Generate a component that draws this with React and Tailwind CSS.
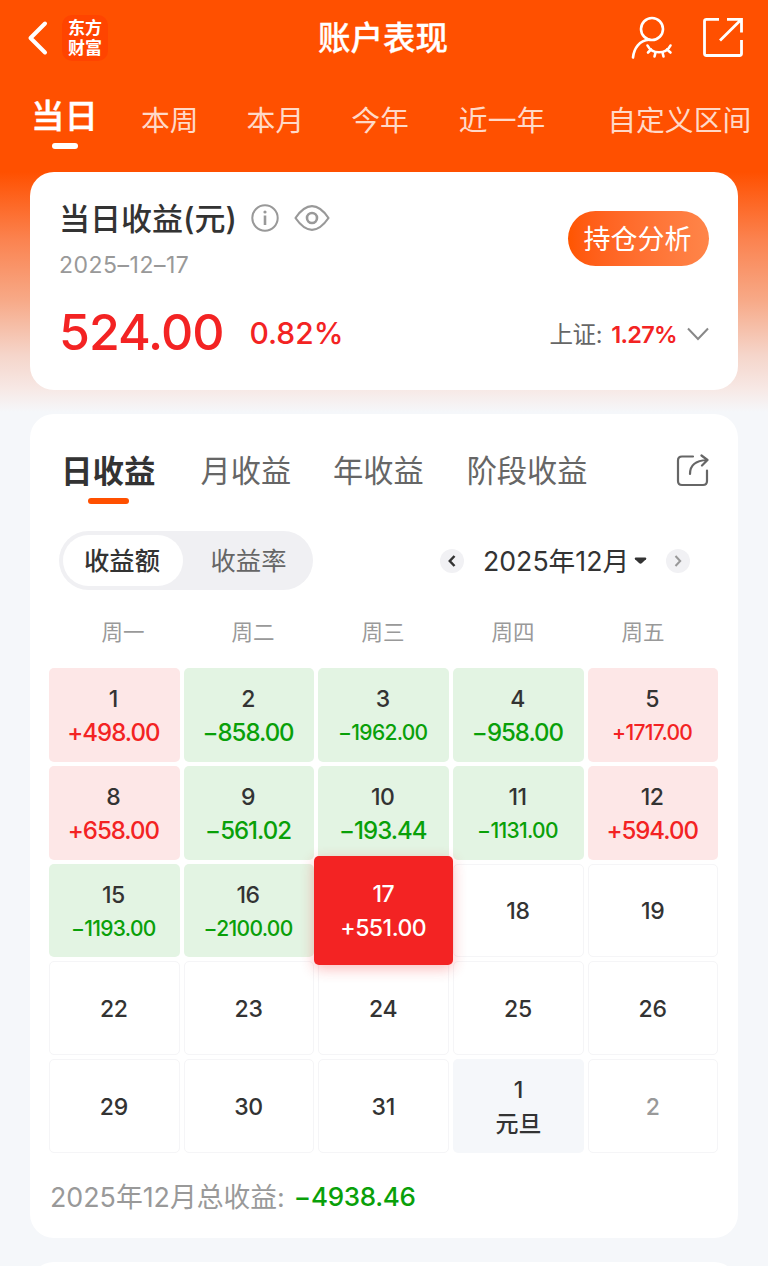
const ranges = [
  { label: '本周', style: 'ml-[43px]' },
  { label: '本月', style: 'ml-[48px]' },
  { label: '今年', style: 'ml-[47px]' },
  { label: '近一年', style: 'ml-[50px]' },
  { label: '自定义区间', style: 'ml-[62px]' },
]

const days = [
  { day: '1', amount: '+498.00' },
  { day: '2', amount: '−858.00' },
  { day: '3', amount: '−1962.00' },
  { day: '4', amount: '−958.00' },
  { day: '5', amount: '+1717.00' },
  { day: '8', amount: '+658.00' },
  { day: '9', amount: '−561.02' },
  { day: '10', amount: '−193.44' },
  { day: '11', amount: '−1131.00' },
  { day: '12', amount: '+594.00' },
  { day: '15', amount: '−1193.00' },
  { day: '16', amount: '−2100.00' },
  { day: '17', amount: '+551.00', selected: true },
  { day: '18' },
  { day: '19' },
  { day: '22' },
  { day: '23' },
  { day: '24' },
  { day: '25' },
  { day: '26' },
  { day: '29' },
  { day: '30' },
  { day: '31' },
  { day: '1', holiday: '元旦' },
  { day: '2', muted: true },
]

function DayCell({ item }) {
  const { day, amount, selected, holiday, muted } = item

  if (selected) {
    return (
      <div className="relative z-10 -mx-1 -mt-[8px] -mb-[8px] flex flex-col items-center rounded-[5px] bg-[#f32323] pt-[26px] pr-px font-medium text-white shadow-[0_4px_14px_rgba(243,35,35,0.3)]">
        <div className="text-[23px] leading-[24px] tracking-[-0.5px]">{day}</div>
        <div className="mt-[10px] text-[23px] leading-[24px] tracking-[-0.5px]">{amount}</div>
      </div>
    )
  }

  if (amount) {
    const up = amount[0] === '+'
    const long = amount.length > 7
    return (
      <div className={`flex flex-col items-center rounded-[5px] pt-[19px] pr-[2px] font-medium ${up ? 'bg-[#fde7e7]' : 'bg-[#e3f4e3]'}`}>
        <div className="text-[23px] leading-[24px] tracking-[-0.5px] text-[#333]">{day}</div>
        <div className={`mt-[10px] leading-[24px] ${long ? 'text-[21px] tracking-[-0.7px]' : 'text-[24px] tracking-[-1px]'} ${up ? 'text-[#f32323]' : 'text-[#09a009]'}`}>{amount}</div>
      </div>
    )
  }

  if (holiday) {
    return (
      <div className="flex flex-col items-center rounded-[5px] bg-[#f5f7fa] pt-[19px] font-medium text-[#333]">
        <div className="text-[23px] leading-[24px]">{day}</div>
        <div className="mt-[10px] text-[23px] leading-[24px]">{holiday}</div>
      </div>
    )
  }

  return (
    <div className={`flex items-center justify-center rounded-[5px] border border-[#f5f5f7] pt-px pr-px text-[23px] font-medium leading-[24px] tracking-[-0.3px] ${muted ? 'text-[#999]' : 'text-[#333]'}`}>
      {day}
    </div>
  )
}

export default function App() {
  return (
    <div className="flex h-[1266px] w-[768px] flex-col overflow-hidden whitespace-nowrap bg-[#f5f7fa] bg-[linear-gradient(to_bottom,#ff5000_0px,#ff5000_172px,#fb8350_240px,#f7a987_300px,#f5d5ca_355px,#f7e9e6_390px,#f5f7fa_412px)] bg-no-repeat font-['Inter','Noto_Sans_CJK_SC',sans-serif]">

      {/* Title Bar */}
      <div className="flex h-[76px] shrink-0 items-center">
        <svg className="ml-[26px]" width="24" height="38" viewBox="0 0 24 38" fill="none" stroke="#fff" strokeWidth="4" strokeLinecap="round" strokeLinejoin="round">
          <path d="M19 4.500 L4.500 19 L19 33.500" />
        </svg>
        <div className="ml-[12px] flex h-[46px] w-[46px] flex-col items-center justify-center rounded-[10px] bg-[#ff4400] pt-px text-[17px] font-bold leading-[19.5px] text-white">
          <div>东方</div>
          <div>财富</div>
        </div>
        <div className="ml-[210px] w-[132px] pt-[2px] text-[32.5px] font-medium leading-[40px] text-white [-webkit-text-stroke:0.3px]">账户表现</div>
        <svg className="ml-[180px]" width="44" height="46" viewBox="0 0 44 46" fill="none" stroke="#fff" strokeWidth="2.600" strokeLinecap="round">
          <circle cx="22" cy="14" r="11" />
          <path d="M3 42.500 C4 33 9.500 25.500 19 24.800" />
          <path d="M17.500 30.500 C22 39.500 36 39.500 40.500 30.500" />
          <path d="M21 34.500 L18 37.500 M25.500 37.500 L24.500 41.500 M32.500 37.500 L33.500 41.500 M37 34.500 L40.500 37.500" />
        </svg>
        <svg className="ml-[28px]" width="42" height="42" viewBox="0 0 42 42" fill="none" stroke="#fff" strokeWidth="2.800">
          <path d="M17 2.300 H4.500 Q2.500 2.300 2.500 4.300 V36.500 Q2.500 38.500 4.500 38.500 H37.500 Q39.500 38.500 39.500 36.500 V23" />
          <path d="M25 2.300 H39.500 V15.500 M39.500 2.300 L18 23.500" />
        </svg>
      </div>

      {/* Range Tabs */}
      <div className="flex h-[96px] shrink-0 pl-[31px]">
        <div className="flex flex-col items-center">
          <div className="mt-[20px] text-[33.5px] font-medium leading-[40px] text-white [-webkit-text-stroke:0.4px]">当日</div>
          <div className="mt-[7px] h-[6px] w-[26px] rounded-full bg-white" />
        </div>
        {ranges.map((r) => (
          <div key={r.label} className={`mt-[25px] text-[28.8px] leading-[40px] text-[#ffd9c8] ${r.style}`}>{r.label}</div>
        ))}
      </div>

      {/* Daily Profit Card */}
      <div className="mx-[30px] flex h-[218px] shrink-0 justify-between rounded-[24px] bg-white px-[29px]">
        <div>
          <div className="mt-[26px] flex h-[40px] items-center">
            <div className="pt-px text-[31px] font-medium leading-[40px] text-[#333]">当日收益(元)</div>
            <svg className="ml-[14px]" width="28" height="28" viewBox="0 0 28 28" fill="none" stroke="#999" strokeWidth="2">
              <circle cx="14" cy="14" r="12.700" />
              <path d="M14 11.500 V21" strokeWidth="2.600" />
              <circle cx="14" cy="8" r="1.600" fill="#999" stroke="none" />
            </svg>
            <svg className="ml-[15px]" width="36" height="28" viewBox="0 0 36 28" fill="none" stroke="#999" strokeWidth="2.200" strokeLinejoin="round">
              <path d="M1.500 14 C7 6 12 2.200 18 2.200 C24 2.200 29 6 34.500 14 C29 22 24 25.800 18 25.800 C12 25.800 7 22 1.500 14 Z" />
              <circle cx="18" cy="14" r="5" strokeWidth="2.600" />
            </svg>
          </div>
          <div className="mt-[15px] text-[23px] leading-[24px] tracking-[0.5px] text-[#999]">2025–12–17</div>
          <div className="mt-[27px] flex items-center text-[#f32323]">
            <div className="text-[50px] font-medium leading-[56px] tracking-[-1px]">524.00</div>
            <div className="ml-[26px] pt-[2px] text-[30px] font-medium leading-[40px]">0.82%</div>
          </div>
        </div>
        <div className="flex flex-col items-end">
          <button className="mt-[39px] h-[55px] w-[141px] rounded-full bg-linear-to-r from-[#ff5500] to-[#ff8549] pt-[2px] pr-[2px] text-[27px] leading-[53px] text-white">持仓分析</button>
          <div className="mt-[48px] flex h-[40px] items-center">
            <div className="pt-px text-[23.5px] tracking-[-0.3px] text-[#666]">上证:</div>
            <div className="ml-[9px] pt-px text-[23.5px] font-semibold tracking-[-0.7px] text-[#f32323]">1.27%</div>
            <svg className="ml-[10px]" width="22" height="14" viewBox="0 0 22 14" fill="none" stroke="#888" strokeWidth="2">
              <path d="M1 1.500 L11 12 L21 1.500" />
            </svg>
          </div>
        </div>
      </div>

      {/* Profit Calendar Card */}
      <div className="mx-[30px] mt-[24px] flex h-[824px] shrink-0 flex-col rounded-[24px] bg-white">
        <div className="flex h-[94px] pl-[31px] text-[30.2px] leading-[40px] text-[#666]">
          <div className="flex flex-col items-center">
            <div className="mt-[38px] text-[31.5px] font-bold text-[#333]">日收益</div>
            <div className="mt-[6px] h-[6px] w-[41px] rounded-full bg-[#ff5000]" />
          </div>
          <div className="ml-[45px] mt-[37px]">月收益</div>
          <div className="ml-[42px] mt-[37px]">年收益</div>
          <div className="ml-[43px] mt-[37px]">阶段收益</div>
          <svg className="ml-[89px] mt-[40px]" width="34" height="34" viewBox="0 0 34 34" fill="none" stroke="#666" strokeWidth="2.200" strokeLinecap="round" strokeLinejoin="round">
            <path d="M17 2.500 H6 Q2 2.500 2 6.500 V27 Q2 31 6 31 H27 Q31 31 31 27 V16.500" />
            <path d="M14 20 C14 12 19 6.500 31 6 M25.500 1.500 L31.500 6 L26 11.500" />
          </svg>
        </div>

        <div className="ml-[29px] mt-[23px] flex h-[59px] items-center">
          <div className="flex h-[59px] w-[254px] items-center rounded-full bg-[#f0f0f3] p-[4px] text-[25.3px]">
            <div className="flex h-[51px] w-[120px] items-center justify-center rounded-full bg-white pr-[2px] font-medium text-[#333]">收益额</div>
            <div className="flex flex-1 items-center justify-center pl-[5px] text-[#666]">收益率</div>
          </div>
          <div className="ml-[127px] flex h-6 w-6 items-center justify-center rounded-full bg-[#f1f1f4]">
            <svg width="8" height="12" viewBox="0 0 8 12" fill="none" stroke="#333" strokeWidth="2.500"><path d="M6.500 1 L1.800 6 L6.500 11" /></svg>
          </div>
          <div className="ml-[19px] w-[147px] text-[26.7px] leading-[40px] text-[#333]">2025年12月</div>
          <svg className="ml-[4px]" width="13" height="8" viewBox="0 0 13 8" fill="#333"><path d="M1.500 0.500 H11.500 Q13 1 12 2.200 L8 6 Q6.500 7.400 5 6 L1 2.200 Q0 1 1.500 0.500 Z" /></svg>
          <div className="ml-[19px] flex h-6 w-6 items-center justify-center rounded-full bg-[#f1f1f4]">
            <svg width="8" height="12" viewBox="0 0 8 12" fill="none" stroke="#999" strokeWidth="2"><path d="M1.500 1 L6.200 6 L1.500 11" /></svg>
          </div>
        </div>

        <div className="mt-[26px] mr-[30px] ml-[28px] grid h-[32px] grid-cols-5 text-center text-[21.500px] leading-[32px] text-[#999]">
          <div>周一</div>
          <div>周二</div>
          <div>周三</div>
          <div>周四</div>
          <div>周五</div>
        </div>

        <div className="mt-[20px] mr-[19.500px] ml-[19px] grid h-[485px] grid-cols-5 grid-rows-5 gap-1">
          {days.map((item, i) => <DayCell key={i} item={item} />)}
        </div>

        <div className="ml-[20px] mt-[24px] flex items-center leading-[40px]">
          <div className="text-[26.8px] text-[#999]">2025年12月总收益:</div>
          <div className="ml-[9px] text-[26px] font-medium tracking-[-0.3px] text-[#09a009]">−4938.46</div>
        </div>
      </div>

      <div className="mx-[30px] mt-[24px] h-[60px] shrink-0 rounded-[24px] bg-white" />
    </div>
  )
}
